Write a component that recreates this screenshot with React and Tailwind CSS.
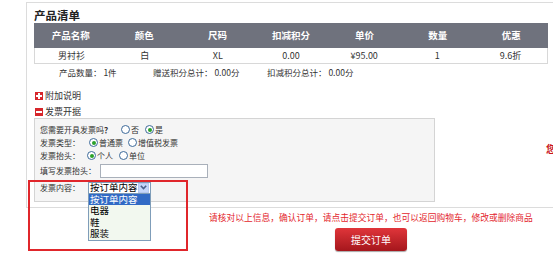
import React from 'react';

const COLUMNS = ['产品名称', '颜色', '尺码', '扣减积分', '单价', '数量', '优惠'];
const ROW = ['男衬衫', '白', 'XL', '0.00', '¥95.00', '1', '9.6折'];

const Radio = ({ checked }) => (
  <span className="inline-flex items-center justify-center w-[9px] h-[9px] rounded-full border border-[#3d6a9a] bg-white shrink-0">
    {checked && <span className="w-[4px] h-[4px] rounded-full bg-[#2ba12b]" />}
  </span>
);

const BoxIcon = ({ minus }) => (
  <span className="relative inline-block w-[8px] h-[8px] bg-[#d7262b] mr-[2px] shrink-0">
    <span className="absolute left-[1px] top-[3px] w-[6px] h-[2px] bg-white" />
    {!minus && <span className="absolute left-[3px] top-[1px] w-[2px] h-[6px] bg-white" />}
  </span>
);

export default function App() {
  return (
    <div className="relative w-[553px] h-[260px] overflow-hidden bg-white text-[#333] text-[9px] font-['Noto_Sans_CJK_SC','Noto_Sans',sans-serif]">
      <div className="pt-[2px] pl-[26px]">
        {/* frame */}
        <div className="h-[206px] border-l border-t border-b border-[#dcdcdc] pl-[7px]">
          <div className="pt-[5px] h-[20px] leading-[15px] text-[11.5px] font-bold text-[#222]">产品清单</div>

          {/* table */}
          <div className="w-[514px]">
            <div className="grid grid-cols-7 h-[25px] bg-[#6f727d] items-center text-white font-bold text-[9.5px]">
              {COLUMNS.map(c => (
                <div key={c} className="text-center">{c}</div>
              ))}
            </div>
            <div className="grid grid-cols-7 h-[16px] items-center border-l border-r border-b border-[#d8d8d8] text-[9px]">
              {ROW.map((c, i) => (
                <div key={i} className="text-center">{c}</div>
              ))}
            </div>
          </div>

          <div className="flex h-[16px] items-center pl-[25px] text-[8.5px]">
            <span className="w-[94px]">产品数量： 1件</span>
            <span className="w-[114px]">赠送积分总计： 0.00分</span>
            <span>扣减积分总计： 0.00分</span>
          </div>

          <div className="mt-[9px] h-[14px] flex items-center pl-[1px] text-[9px]">
            <BoxIcon />附加说明
          </div>
          <div className="mt-[2px] h-[13px] flex items-center pl-[1px] text-[9px]">
            <BoxIcon minus />发票开据
          </div>

          <div className="flex items-start">
            {/* invoice box */}
            <div className="shrink-0 w-[401px] h-[84px] border border-[#d4d4d4] bg-[#f5f5f5] pl-[5px] pt-[4px] text-[8px]">
              <div className="h-[13px] flex items-center">
                <span>您需要开具发票吗<b>？</b></span>
                <span className="ml-[9px] flex items-center gap-[1px]"><Radio />否</span>
                <span className="ml-[6px] flex items-center gap-[1px]"><Radio checked />是</span>
              </div>
              <div className="h-[13px] flex items-center">
                <span className="w-[49px]">发票类型：</span>
                <span className="flex items-center gap-[1px]"><Radio checked />普通票</span>
                <span className="ml-[5px] flex items-center gap-[1px]"><Radio />增值税发票</span>
              </div>
              <div className="h-[13px] flex items-center">
                <span className="w-[47px]">发票抬头：</span>
                <span className="flex items-center gap-[1px]"><Radio checked />个人</span>
                <span className="ml-[6px] flex items-center gap-[1px]"><Radio />单位</span>
              </div>
              <div className="mt-[1px] h-[15px] flex items-center">
                <span className="w-[60px]">填写发票抬头：</span>
                <span className="w-[108px] h-[14px] border border-[#a9b0ba] bg-white" />
              </div>
              <div className="mt-[3px] h-[13px] flex items-center">
                <span className="w-[48px]">发票内容：</span>
                <div className="relative">
                  <div className="w-[63px] h-[12px] border border-[#7f9db9] bg-white flex items-center text-[9.5px] text-black">
                    <span className="pl-[1px] flex-1 leading-none">按订单内容</span>
                    <span className="w-[11px] h-[10px] mr-[1px] bg-[#c4d5fa] border border-[#b5c8f0] flex items-center justify-center">
                      <svg width="7" height="5" viewBox="0 0 7 5">
                        <path d="M0.8 0.8 L3.5 3.5 L6.2 0.8" fill="none" stroke="#4a5f8a" strokeWidth="1.6" />
                      </svg>
                    </span>
                  </div>
                  <div className="absolute left-0 top-[11px] w-[63px] border border-[#7f9db9] bg-[#f2f8ef] text-[9.5px] text-black leading-[11.5px] z-10">
                    <div className="bg-[#316ac5] text-white pl-[1px]">按订单内容</div>
                    <div className="pl-[1px]">电器</div>
                    <div className="pl-[1px]">鞋</div>
                    <div className="pl-[1px]">服装</div>
                  </div>
                </div>
              </div>
            </div>
            <div className="shrink-0 ml-[111px] pt-[23px] whitespace-nowrap text-[10px] font-bold text-[#c8161d]">您选择的发票</div>
          </div>
        </div>
      </div>

      {/* annotation */}
      <div className="absolute left-[28px] top-[180px] w-[160px] h-[71px] border-2 border-[#e0262b] z-20" />

      <div className="mt-[3px] h-[14px] leading-[14px] pl-[209px] text-[8.75px] text-[#e3262d] whitespace-nowrap">
        请核对以上信息，确认订单，请点击提交订单，也可以返回购物车，修改或删除商品
      </div>
      <div className="mt-[3px] ml-[335px] w-[72px] h-[23px] rounded-[3px] bg-gradient-to-b from-[#e0353a] to-[#a5161c] shadow-[0_1px_1px_rgba(0,0,0,0.35)] flex items-center justify-center text-white text-[10px]">
        提交订单
      </div>
    </div>
  );
}
